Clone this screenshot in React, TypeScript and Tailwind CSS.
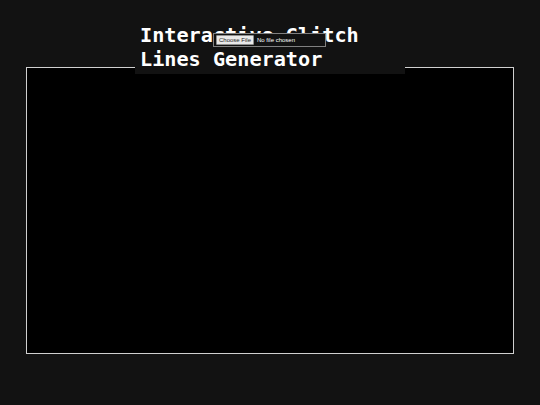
import React from "react";

export default function App() {
  return (
    <div className="relative w-[540px] h-[405px] bg-[#121212] overflow-hidden">
      <div className="pt-[67px] flex justify-center">
        <div className="w-[488px] h-[287px] bg-black border border-[#d0d0d0]" />
      </div>
      <h1
        className="absolute left-[135px] top-[21px] w-[270px] bg-[#121212] px-[5px] pt-[2px] pb-[3px] text-white font-bold text-[20.2px] leading-[24px]"
        style={{ fontFamily: '"DejaVu Sans Mono", monospace' }}
      >
        Interactive Glitch Lines Generator
      </h1>
      <div
        className="absolute left-[213px] top-[33px] w-[113px] h-[14px] border border-[#808080] bg-[#121212] flex items-center pl-[2px] gap-[3px]"
        style={{ fontFamily: '"Liberation Sans", Arial, sans-serif' }}
      >
        <span className="h-[10px] px-[2px] bg-[#e9e9e9] border border-[#8f8f8f] rounded-[1px] text-[6px] leading-[8px] text-[#222]">
          Choose File
        </span>
        <span className="text-[6px] leading-[8px] text-white">No file chosen</span>
      </div>
    </div>
  );
}
